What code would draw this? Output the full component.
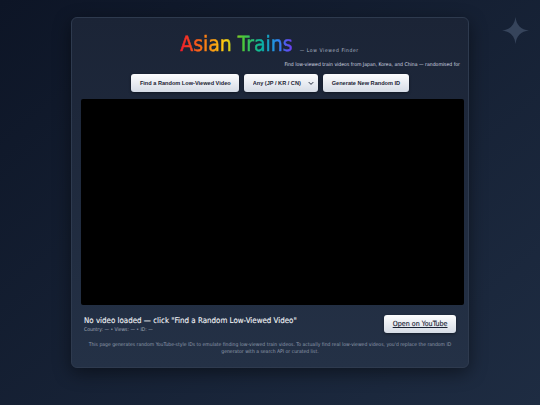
<div class="page">
  <svg class="star" viewBox="0 0 30 30" aria-hidden="true"><path d="M15 0 C16 9 21 14 30 15 C21 16 16 21 15 30 C14 21 9 16 0 15 C9 14 14 9 15 0Z" /></svg>
  <main class="card">
    <header class="head">
      <h1 class="title">Asian Trains</h1>
      <span class="sub">— Low Viewed Finder</span>
    </header>
    <p class="lead">Find low-viewed train videos from Japan, Korea, and China — randomised for</p>
    <div class="controls">
      <button class="btn">Find a Random Low-Viewed Video</button>
      <div class="selwrap">
        <select class="btn sel"><option>Any (JP / KR / CN)</option></select>
        <svg class="chev" viewBox="0 0 8 6" aria-hidden="true"><path d="M1 1.5 L4 4.5 L7 1.5" /></svg>
      </div>
      <button class="btn">Generate New Random ID</button>
    </div>
    <div class="video"></div>
    <div class="info">
      <div class="meta">
        <div class="vtitle">No video loaded — click "Find a Random Low-Viewed Video"</div>
        <div class="small">Country: — • Views: — • ID: —</div>
      </div>
      <a class="open" href="#top">Open on YouTube</a>
    </div>
    <p class="foot">This page generates random YouTube-style IDs to emulate finding low-viewed train videos. To actually find real low-viewed videos, you'd replace the random ID generator with a search API or curated list.</p>
  </main>
</div>

<style>
  :global(body) { margin: 0; }
  .page {
    position: relative;
    width: 540px;
    height: 405px;
    overflow: hidden;
    box-sizing: border-box;
    padding: 17px 71px 0;
    background: linear-gradient(140deg, #0d1526 0%, #1e2c42 100%);
    font-family: "DejaVu Sans", sans-serif;
    font-stretch: condensed;
    text-rendering: geometricPrecision;
  }
  .star { position: absolute; left: 502px; top: 16.5px; width: 27px; height: 27px; }
  .star path { fill: #36445b; }
  .card {
    box-sizing: border-box;
    width: 398px;
    height: 351px;
    padding: 14px 4px 0 9px;
    border-radius: 6px;
    border: 1px solid #2e3a4e;
    background: linear-gradient(180deg, #1b2436 0%, #243146 100%);
    box-shadow: 0 5px 18px rgba(0, 0, 0, .45);
  }
  .head { display: flex; align-items: flex-end; justify-content: center; gap: 7px; height: 24px; padding-right: 6px; }
  .title {
    margin: 0;
    font-size: 21px;
    font-weight: 400;
    line-height: 24px;
    white-space: pre;
    background: linear-gradient(90deg, #f0182c 0%, #fb7414 20%, #ffd010 40%, #50c834 55%, #08b8a4 72%, #2a88f0 86%, #7238f0 100%);
    -webkit-background-clip: text;
    background-clip: text;
    color: transparent;
    -webkit-text-stroke: .5px transparent;
  }
  .sub { font-size: 5px; letter-spacing: .6px; color: #b0bac8; line-height: 9px; }
  .lead { margin: 5px 0 0; font-size: 5.1px; line-height: 9px; color: #d4d9e2; text-align: right; padding-right: 4px; }
  .controls { display: flex; justify-content: center; gap: 5px; margin-top: 4px; padding-right: 5px; }
  .btn {
    box-sizing: border-box;
    height: 18px;
    padding: 0 8.5px;
    border: 0;
    border-radius: 3px;
    background: linear-gradient(180deg, #fdfdfe 0%, #d6dce6 100%);
    color: #1a2233;
    font-family: "Liberation Sans", sans-serif;
    font-stretch: normal;
    font-size: 5.6px;
    font-weight: 700;
    box-shadow: 0 1px 3px rgba(0, 0, 0, .4);
  }
  .selwrap { position: relative; display: flex; }
  .sel { width: 74px; appearance: none; }
  .chev { position: absolute; right: 4px; top: 7px; width: 6px; height: 4.5px; pointer-events: none; }
  .chev path { fill: none; stroke: #1a2233; stroke-width: 1.3; }
  .video { width: 383px; height: 206px; margin-top: 7px; background: #000; border-radius: 2px; }
  .info { display: flex; justify-content: space-between; align-items: flex-start; margin-top: 10px; padding: 0 8px 0 3px; }
  .vtitle { font-size: 7.9px; font-weight: 400; color: #f2f4f7; line-height: 11px; -webkit-text-stroke: .1px #f2f4f7; }
  .small { font-size: 5px; color: #a4aebd; line-height: 8px; }
  .open {
    box-sizing: border-box;
    height: 18px;
    line-height: 18px;
    padding: 0 8.5px;
    border-radius: 3px;
    background: linear-gradient(180deg, #fdfdfe 0%, #d6dce6 100%);
    color: #1a2233;
    font-size: 7.1px;
    text-decoration: underline;
    -webkit-text-stroke: .12px #1a2233;
    box-shadow: 0 1px 3px rgba(0, 0, 0, .4);
  }
  .foot { margin: 8px 8px 0 3px; font-size: 5.05px; line-height: 7px; color: #909bad; text-align: center; }
</style>
